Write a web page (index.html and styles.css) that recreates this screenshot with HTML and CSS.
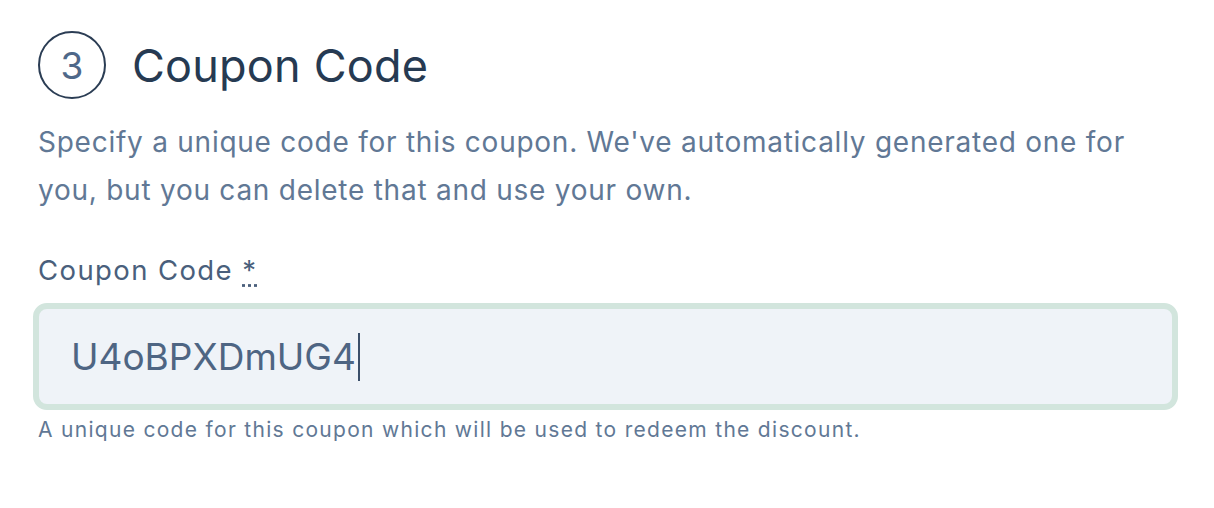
FILE: index.html
```html
<!DOCTYPE html>
<html>
<head>
<meta charset="utf-8">
<link rel="stylesheet" href="styles.css">
</head>
<body>
<section class="step">
  <div class="step-head">
    <span class="step-num">3</span>
    <h2 class="step-title">Coupon Code</h2>
  </div>
  <p class="step-desc">Specify a unique code for this coupon. We've automatically generated one for you, but you can delete that and use your own.</p>
  <label class="field-label" for="code">Coupon Code <abbr class="req" title="required">*</abbr></label>
  <div class="field-input">
    <span class="field-value">U4oBPXDmUG4</span><span class="caret"></span>
  </div>
  <p class="field-help">A unique code for this coupon which will be used to redeem the discount.</p>
</section>
</body>
</html>
```

FILE: styles.css
```css
html, body {
  margin: 0;
  background: #ffffff;
}
body {
  font-family: "Inter", "Lato", sans-serif;
}
.step {
  padding: 31px 36px 0 38px;
}
.step-head {
  display: flex;
  align-items: center;
  gap: 26px;
}
.step-num {
  width: 64px;
  height: 64px;
  border: 2px solid #2b3d54;
  border-radius: 50%;
  display: flex;
  align-items: center;
  justify-content: center;
  font-size: 37px;
  color: #4f6889;
  box-sizing: content-box;
}
.step-title {
  margin: 0;
  font-size: 45px;
  font-weight: 400;
  letter-spacing: 0.2px;
  color: #263a52;
}
.step-desc {
  margin: 19px 0 0;
  font-size: 28px;
  line-height: 48px;
  letter-spacing: 0.75px;
  color: #617895;
  max-width: 1110px;
}
.field-label {
  display: block;
  margin-top: 36px;
  font-size: 27.5px;
  line-height: 40px;
  letter-spacing: 1.4px;
  color: #4a5f7c;
}
.req {
  text-decoration: underline dotted;
  text-underline-offset: 4px;
  cursor: help;
}
.field-input {
  margin: 13px 0 0 -5px;
  height: 95px;
  border: 6px solid #d2e5dd;
  border-radius: 14px;
  background: #eff3f8;
  display: flex;
  align-items: center;
  padding-left: 32px;
}
.field-value {
  font-size: 37px;
  color: #4e6583;
}
.caret {
  width: 2px;
  height: 48px;
  background: #3b4f6a;
  margin-left: 2px;
}
.field-help {
  margin: 5px 0 0;
  font-size: 21px;
  line-height: 30px;
  letter-spacing: 1.3px;
  color: #617895;
}
```
